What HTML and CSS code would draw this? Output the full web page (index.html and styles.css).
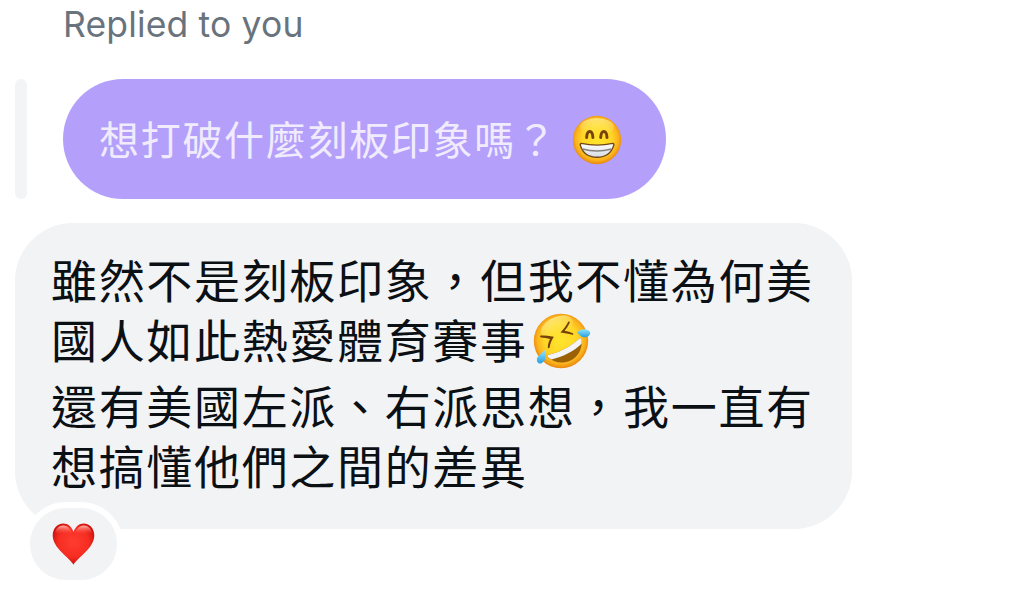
FILE: index.html
```html
<!DOCTYPE html>
<html lang="zh-Hant">
  <head>
    <meta charset="utf-8">
    <title>Messages</title>
    <link rel="stylesheet" href="styles.css">
  </head>

  <body>
    <div class="chat">
      <div class="reply-label">Replied to you</div>

      <div class="quote">
        <div class="quote-bar"></div>
        <div class="quote-bubble">
          <span class="quote-text">想打破什麼刻板印象嗎？</span>
          <svg class="emoji-grin" viewBox="0 0 50 50" role="img" aria-label="grinning face">
            <defs>
              <radialGradient id="face" cx="50%" cy="48%" r="52%">
                <stop offset="0" stop-color="#ffe52c" />
                <stop offset="0.6" stop-color="#ffd526" />
                <stop offset="0.85" stop-color="#fbb11d" />
                <stop offset="1" stop-color="#e8860d" />
              </radialGradient>
              <linearGradient id="shine" x1="0" y1="0" x2="0" y2="1">
                <stop offset="0" stop-color="#fff79a" stop-opacity="0.7" />
                <stop offset="1" stop-color="#fff06a" stop-opacity="0" />
              </linearGradient>
              <linearGradient id="teeth" x1="0" y1="0" x2="0" y2="1">
                <stop offset="0" stop-color="#ffffff" />
                <stop offset="1" stop-color="#d5dbe4" />
              </linearGradient>
            </defs>
            <circle cx="25" cy="25" r="24.2" fill="url(#face)" />
            <ellipse cx="25" cy="12" rx="17" ry="9" fill="url(#shine)" />
            <path d="M14.6 22.6c.4-8.2 5.9-8.2 6.3 0M28.7 22.6c.4-8.2 5.9-8.2 6.3 0" fill="none" stroke="#77420b" stroke-width="2.9" stroke-linecap="round" />
            <path d="M9.3 28.4c10 2.2 21.4 2.2 31.4 0 1 0 1.3.8 1.1 1.7C39.5 37.8 33.5 42.2 25 42.2S10.5 37.8 8.3 30.1c-.2-.9.1-1.7 1-1.7z" fill="url(#teeth)" stroke="#704719" stroke-width="1.4" />
            <path d="M10.5 34c9 2.4 20 2.4 29 0" fill="none" stroke="#85817d" stroke-width="1.4" />
          </svg>
        </div>
      </div>

      <div class="message">
        <p class="message-text">雖然不是刻板印象，但我不懂為何美<br>國人如此熱愛體育賽事<svg class="emoji-rofl" viewBox="0 0 58 56" role="img" aria-label="rolling on the floor laughing">
            <defs>
              <linearGradient id="tear" x1="0" y1="0" x2="0" y2="1">
                <stop offset="0" stop-color="#91e3fd" />
                <stop offset="1" stop-color="#279fe0" />
              </linearGradient>
            </defs>
            <circle cx="28" cy="28" r="27.2" fill="url(#face)" />
            <ellipse cx="24" cy="14" rx="17" ry="10" transform="rotate(-25 24 14)" fill="url(#shine)" />
            <path d="M8 22.6c4.3 0 8.3.3 12.900 1.2-2.300 3.100-3.500 6.600-4.300 10.800-.3 1-1.800.9-1.800-.2.100-3.300.9-6.200 2.300-8.500-3-.6-6-1-9.100-1.300-1.200-.2-1.200-2 0-2zM35.200 8.800c.9-.8 2 .1 1.400 1.200-1.500 3-3.100 5.500-5 7.700 3 .5 5.800 1.300 8.200 2.500 1 .6.5 1.900-.6 1.600-3.800-1.100-7.300-1.800-11.800-2.300 3.200-3.200 5.700-6.700 7.800-10.700z" fill="#754109" />
            <path d="M15.2 42C27 39.3 37.5 33.5 45.8 26c1.700-1.300 2.700-.8 2.900 1 .8 8.800-3.500 16.800-11.200 20.500-7.700 3.500-16.500 2.400-21.700-2.700-1.200-1.200-1.200-2.300-.6-2.800z" fill="#9b6107" />
            <path d="M15.2 42C27 39.3 37.5 33.5 45.8 26c1.700-1.300 2.700-.8 2.900 1l-.1 3.800C40.500 38.500 29.500 44.200 18.500 46.400l-2.700-1.600c-1.200-1.200-1.200-2.300-.6-2.800z" fill="#f2f4f8" />
            <path d="M44.500 18.700c4.200-3.300 9.500-3.300 12.200-.2 1.500 2-.5 5.500-4.700 5.800-3.600.2-5-2.500-7.500-4.100-.6-.5-.5-1 0-1.500z" fill="url(#tear)" />
            <path d="M12.200 38c1.700 5 .3 10.300-3.700 12.200-2.600 1.100-5-.7-4.600-4.200.4-3.400 4-4.400 6.800-8.100.5-.6 1.100-.6 1.500.1z" fill="url(#tear)" />
          </svg></p>
        <p class="message-text">還有美國左派、右派思想，我一直有<br>想搞懂他們之間的差異</p>

        <div class="reaction">
          <svg class="heart" viewBox="0 0 43 43" role="img" aria-label="heart">
            <defs>
              <radialGradient id="red" cx="50%" cy="45%" r="60%">
                <stop offset="0" stop-color="#ff3c30" />
                <stop offset="0.6" stop-color="#f62d22" />
                <stop offset="1" stop-color="#c00a08" />
              </radialGradient>
              <linearGradient id="gloss" x1="0" y1="0" x2="0" y2="1">
                <stop offset="0" stop-color="#ffb2a8" />
                <stop offset="1" stop-color="#ff5548" stop-opacity="0" />
              </linearGradient>
            </defs>
            <path d="M21.5 41.8C17.5 34.5 1 25.5.7 12.800.5 6 5.300.6 11.300.6c4.800 0 8.300 3.300 10.200 8.400C23.400 3.900 26.900.6 31.700.6c6 0 10.800 5.400 10.600 12.200C42 25.500 25.500 34.500 21.500 41.800z" fill="url(#red)" />
            <path d="M3 11C3.5 5.5 7 2.6 11.3 2.6c4.600 0 7.700 3.600 8.700 8.400zM23 11c1-4.800 4.100-8.400 8.700-8.400 4.300 0 7.800 2.900 8.300 8.400z" fill="url(#gloss)" />
          </svg>
        </div>
      </div>
    </div>
  </body>
</html>
```

FILE: styles.css
```css
body {
  margin: 0;
  background-color: #fff;
  font-family: Inter, "Noto Sans CJK TC", sans-serif;
}

.chat {
  display: flex;
  flex-direction: column;
  align-items: flex-start;
  box-sizing: border-box;
  min-height: 598px;
  padding: 3px 15px 0;
}

/* label over the quoted message */
.reply-label {
  height: 44px;
  margin-left: 48px;
  color: #69737d;
  font-size: 35.5px;
  line-height: 44px;
  letter-spacing: 0.15px;
  white-space: nowrap;
}

/* quoted message */
.quote {
  display: flex;
  gap: 36px;
  margin-top: 32px;
}

.quote-bar {
  width: 12px;
  border-radius: 6px;
  background-color: #f2f4f6;
}

.quote-bubble {
  display: flex;
  align-items: center;
  box-sizing: border-box;
  width: 603px;
  height: 120px;
  padding: 0 36px;
  border-radius: 60px;
  background-color: #b4a0fb;
}

.quote-text {
  padding-bottom: 3px;
  color: #f0ecfe;
  font-family: "Noto Sans CJK TC", sans-serif;
  font-size: 40px;
  line-height: 60px;
  letter-spacing: 1.7px;
  white-space: nowrap;
}

.emoji-grin {
  width: 50px;
  height: 50px;
  margin: 1px 0 0 14px;
}

/* main message */
.message {
  position: relative;
  box-sizing: border-box;
  width: 837px;
  height: 306px;
  margin-top: 24px;
  padding: 25px 36px;
  border-radius: 58px;
  background-color: #f2f3f5;
}

.message-text {
  margin: 0 0 6px;
  color: #0b1014;
  font-family: "Noto Sans CJK TC", sans-serif;
  font-size: 46px;
  line-height: 60px;
  letter-spacing: 1.67px;
  white-space: nowrap;
}

.emoji-rofl {
  width: 58px;
  height: 56px;
  margin: -10px 0 -10px 5px;
  vertical-align: -1px;
}

/* reaction badge on the bubble corner */
.reaction {
  position: absolute;
  left: 9px;
  bottom: -57px;
  display: flex;
  justify-content: center;
  align-items: center;
  width: 87px;
  height: 72px;
  border: 6px solid #fff;
  border-radius: 42px;
  background-color: #f2f3f5;
}

.heart {
  width: 43px;
  height: 43px;
}
```
